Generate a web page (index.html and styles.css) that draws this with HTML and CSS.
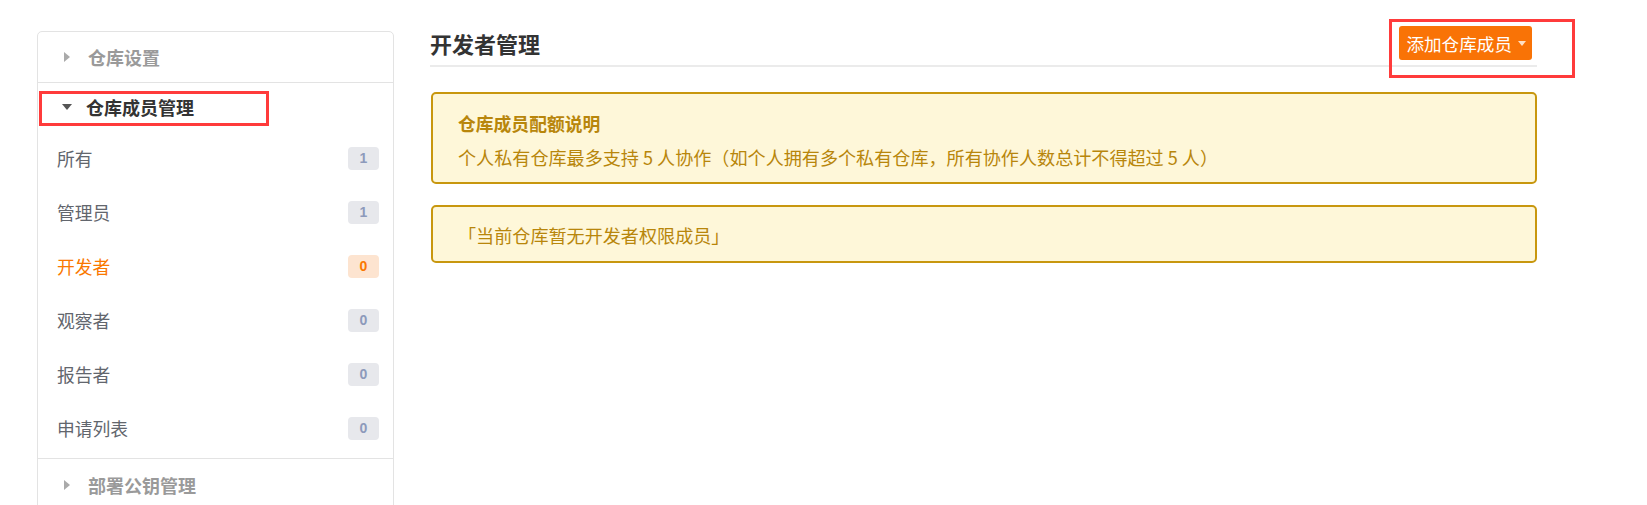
FILE: index.html
```html
<!DOCTYPE html>
<html lang="zh-CN">
<head>
    <meta charset="UTF-8">
    <meta name="viewport" content="width=device-width, initial-scale=1.0">
    <title>开发者管理</title>
    <link rel="stylesheet" href="styles.css">
</head>
<body>
    <div class="page">
        <aside class="side-menu">
            <div class="menu-group">
                <div class="menu-head"><span class="arrow arrow-right"></span>仓库设置</div>
            </div>
            <div class="menu-group open">
                <div class="menu-head active"><span class="arrow arrow-down"></span>仓库成员管理</div>
                <ul class="menu-list">
                    <li><span>所有</span><span class="badge">1</span></li>
                    <li><span>管理员</span><span class="badge">1</span></li>
                    <li class="current"><span>开发者</span><span class="badge">0</span></li>
                    <li><span>观察者</span><span class="badge">0</span></li>
                    <li><span>报告者</span><span class="badge">0</span></li>
                    <li><span>申请列表</span><span class="badge">0</span></li>
                </ul>
            </div>
            <div class="menu-group">
                <div class="menu-head"><span class="arrow arrow-right"></span>部署公钥管理</div>
            </div>
        </aside>

        <main class="content">
            <div class="content-head">
                <h2>开发者管理</h2>
                <button class="add-btn">添加仓库成员<span class="caret"></span></button>
            </div>

            <div class="notice">
                <div class="notice-title">仓库成员配额说明</div>
                <div class="notice-text">个人私有仓库最多支持 5 人协作（如个人拥有多个私有仓库，所有协作人数总计不得超过 5 人）</div>
            </div>

            <div class="notice notice-empty">
                <div class="notice-text">「当前仓库暂无开发者权限成员」</div>
            </div>
        </main>
    </div>

    <!-- annotation boxes -->
    <div class="mark mark-menu"></div>
    <div class="mark mark-btn"></div>
</body>
</html>
```

FILE: styles.css
```css
html, body {
    margin: 0;
    height: 505px;
    overflow: hidden;
    background: #fff;
}
body {
    font-family: "Noto Sans CJK SC", "Noto Sans", sans-serif;
    font-size: 17.8px;
    color: #333;
    position: relative;
}
.page {
    display: flex;
    align-items: flex-start;
    padding-left: 37px;
    gap: 36px;
}

/* side menu */
.side-menu {
    width: 355px;
    margin-top: 31px;
    border: 1px solid #e3e3e3;
    border-radius: 5px;
    flex-shrink: 0;
}
.menu-group {
    border-bottom: 1px solid #e3e3e3;
}
.menu-head {
    display: flex;
    align-items: center;
    height: 50px;
    padding-left: 25px;
    font-size: 18px;
    font-weight: bold;
    color: #9a9a9a;
}
.menu-group.open .menu-head {
    height: 48px;
}
.menu-group.open {
    padding-bottom: 3px;
}
.menu-group:last-child .menu-head {
    height: 52px;
}
.menu-head.active {
    color: #333;
}
.arrow {
    display: inline-block;
    width: 0;
    height: 0;
    margin-right: 18px;
}
.arrow-right {
    border-top: 5px solid transparent;
    border-bottom: 5px solid transparent;
    border-left: 6px solid #aaa;
    margin-left: 1px;
}
.arrow-down {
    border-left: 5.5px solid transparent;
    border-right: 5.5px solid transparent;
    border-top: 6px solid #555;
    margin-left: -1px;
    margin-right: 14px;
}
.menu-list {
    list-style: none;
    margin: 0;
    padding: 0;
}
.menu-list li {
    display: flex;
    align-items: center;
    justify-content: space-between;
    height: 54px;
    padding: 0 14px 0 19px;
    color: #62666d;
}
.menu-list li.current {
    color: #fa7800;
}
.badge {
    display: inline-block;
    width: 31px;
    height: 23px;
    line-height: 23px;
    text-align: center;
    border-radius: 4px;
    background: #e7e8ec;
    color: #8d9abb;
    font-size: 14px;
    font-weight: bold;
    font-family: "Liberation Sans", Arial, sans-serif;
}
.menu-list li.current .badge {
    background: #fde4d0;
    color: #fa7800;
}

/* content */
.content {
    width: 1107px;
}
.content-head {
    display: flex;
    align-items: center;
    justify-content: space-between;
    padding: 24px 5px 3px 0;
    height: 38px;
    border-bottom: 2px solid #ebebeb;
}
.content-head h2 {
    margin: 0;
    font-size: 22px;
    font-weight: bold;
    color: #333;
}
.add-btn {
    height: 34px;
    padding: 0 6px 0 7px;
    border: none;
    border-radius: 3px;
    background: #f97306;
    color: #fff;
    font-family: inherit;
    font-size: 17.6px;
    display: flex;
    align-items: center;
}
.caret {
    display: inline-block;
    width: 0;
    height: 0;
    margin-left: 6px;
    border-left: 4.5px solid transparent;
    border-right: 4.5px solid transparent;
    border-top: 5px solid #ffe0c4;
}
.notice {
    margin: 25px 0 0 1px;
    padding: 15px 25px 11px;
    border: 2px solid #c8970e;
    border-radius: 5px;
    background: #fef7d9;
    color: #b8860b;
}
.notice-title {
    line-height: 28px;
    font-weight: bold;
}
.notice-text {
    line-height: 28px;
    margin-top: 6px;
    font-size: 18.1px;
}
.notice-empty {
    margin-top: 21px;
    padding: 14px 25px 12px;
}
.notice-empty .notice-text {
    margin-top: 0;
}

/* red annotation frames over the screenshot */
.mark {
    position: absolute;
    border: 3px solid #ff3b3b;
    box-sizing: border-box;
}
.mark-menu {
    left: 39px;
    top: 91px;
    width: 230px;
    height: 35px;
}
.mark-btn {
    left: 1389px;
    top: 19px;
    width: 186px;
    height: 59px;
}
```
